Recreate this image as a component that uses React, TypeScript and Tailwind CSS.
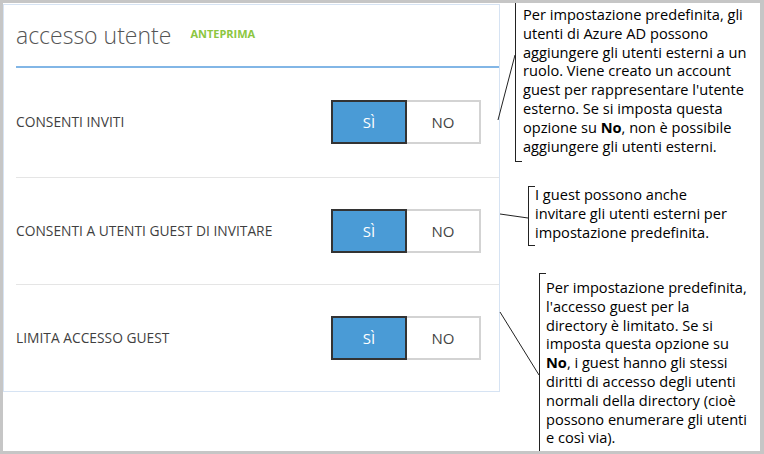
import React from 'react';

const rows = [
  { label: 'CONSENTI INVITI', height: 'h-[110px]' },
  { label: 'CONSENTI A UTENTI GUEST DI INVITARE', height: 'h-[108px]' },
  { label: 'LIMITA ACCESSO GUEST', height: 'h-[106px]' },
];

const Toggle = () => (
  <div className="flex h-[44px] text-[15px]">
    <div className="w-[76px] flex items-center justify-center bg-[#4a9bd6] border-2 border-[#333333] text-white">
      SÌ
    </div>
    <div className="w-[74px] flex items-center justify-center bg-white border-2 border-l-0 border-[#d3d3d3] text-[#444444]">
      NO
    </div>
  </div>
);

const App = () => {
  return (
    <div
      className="relative w-[764px] h-[454px] bg-white border-[3px] border-r-4 border-[#c6c6c6] flex overflow-hidden text-black"
      style={{ fontFamily: '"Open Sans", "Noto Sans", sans-serif' }}
    >
      {/* Panel */}
      <div className="mt-[1px] w-[497px] h-[388px] border border-[#d6e3f3] bg-white flex flex-col shrink-0">
        <div className="ml-[12px] h-[63px] border-b-2 border-[#82b6e6] flex items-center gap-[19px]">
          <span className="text-[23px] font-light text-[#555555] leading-none mt-[1px]">accesso utente</span>
          <span className="text-[11px] font-bold text-[#8cc63f] -mt-[3px]">ANTEPRIMA</span>
        </div>
        {rows.map((row, i) => (
          <div
            key={i}
            className={`ml-[12px] ${row.height} flex items-center justify-between pr-[18px] ${i < rows.length - 1 ? 'border-b border-[#e5e5e5]' : ''}`}
          >
            <span className="text-[13.8px] text-[#3f3f3f]">{row.label}</span>
            <Toggle />
          </div>
        ))}
      </div>

      {/* Callouts */}
      <div className="flex flex-col text-[14.6px] leading-[18.8px]">
        <div className="ml-[15px] flex h-[159px]">
          <div className="w-[7px] border-l border-b border-[#222222]" />
          <div className="pl-[1px] pt-[2px] whitespace-nowrap">
            <div>Per impostazione predefinita, gli</div>
            <div>utenti di Azure AD possono</div>
            <div>aggiungere gli utenti esterni a un</div>
            <div>ruolo. Viene creato un account</div>
            <div>guest per rappresentare l'utente</div>
            <div>esterno. Se si imposta questa</div>
            <div>opzione su <b>No</b>, non è possibile</div>
            <div>aggiungere gli utenti esterni.</div>
          </div>
        </div>

        <div className="ml-[28px] mt-[24px] flex h-[60px]">
          <div className="w-[7px] border-l border-t border-b border-[#222222]" />
          <div className="-mt-[1px] whitespace-nowrap">
            <div>I guest possono anche</div>
            <div>invitare gli utenti esterni per</div>
            <div>impostazione predefinita.</div>
          </div>
        </div>

        <div className="ml-[39px] mt-[27px] flex flex-1">
          <div className="w-[7px] border-l border-t border-[#222222]" />
          <div className="pt-[5px] whitespace-nowrap">
            <div>Per impostazione predefinita,</div>
            <div>l'accesso guest per la</div>
            <div>directory è limitato. Se si</div>
            <div>imposta questa opzione su</div>
            <div><b>No</b>, i guest hanno gli stessi</div>
            <div>diritti di accesso degli utenti</div>
            <div>normali della directory (cioè</div>
            <div>possono enumerare gli utenti</div>
            <div>e così via).</div>
          </div>
        </div>
      </div>

      {/* Leader lines */}
      <svg className="absolute left-0 top-0 pointer-events-none" width="764" height="454" viewBox="3 3 764 454">
        <line x1="498" y1="120" x2="515" y2="55" stroke="#222" strokeWidth="1" />
        <line x1="500" y1="214" x2="528" y2="218" stroke="#222" strokeWidth="1" />
        <line x1="500" y1="312" x2="539" y2="375" stroke="#222" strokeWidth="1" />
      </svg>
    </div>
  );
};

export default App;
